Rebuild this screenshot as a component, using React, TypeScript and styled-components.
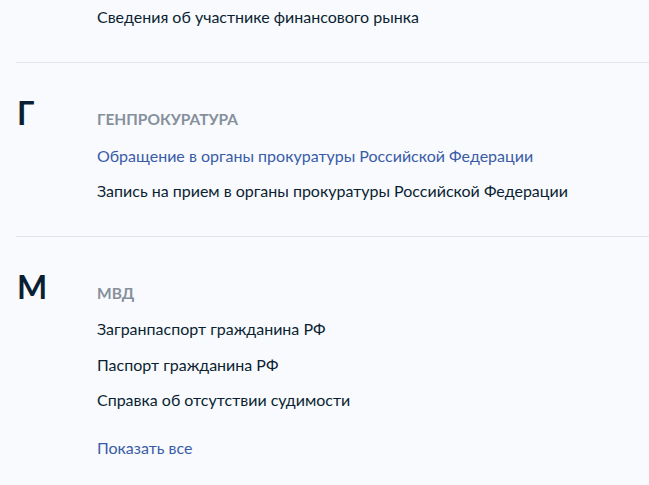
import styled, { createGlobalStyle } from "styled-components";

const GlobalStyle = createGlobalStyle`
  html, body {
    margin: 0;
    padding: 0;
    background: #f8fafd;
  }
  body {
    font-family: Lato, "Noto Sans", sans-serif;
    color: #0b1f33;
  }
`;

type Service = { title: string; link?: boolean };

type Group = {
  letter: string;
  agency: string;
  services: Service[];
  more?: boolean;
};

const groups: Group[] = [
  {
    letter: "Г",
    agency: "Генпрокуратура",
    services: [
      { title: "Обращение в органы прокуратуры Российской Федерации", link: true },
      { title: "Запись на прием в органы прокуратуры Российской Федерации" },
    ],
  },
  {
    letter: "М",
    agency: "МВД",
    services: [
      { title: "Загранпаспорт гражданина РФ" },
      { title: "Паспорт гражданина РФ" },
      { title: "Справка об отсутствии судимости" },
    ],
    more: true,
  },
];

const App = () => {
  return (
    <Page>
      <GlobalStyle />
      <Tail>
        <span />
        <List>
          <Item>Сведения об участнике финансового рынка</Item>
        </List>
      </Tail>
      {groups.map((group) => (
        <Section key={group.letter}>
          <Letter>{group.letter}</Letter>
          <Agency>{group.agency}</Agency>
          <span />
          <List>
            {group.services.map((service) => (
              <Item key={service.title} link={service.link}>
                {service.title}
              </Item>
            ))}
            {group.more && <More>Показать все</More>}
          </List>
        </Section>
      ))}
    </Page>
  );
};

const Page = styled.div`
  padding-left: 16px;
`;

const Row = styled.div`
  display: grid;
  grid-template-columns: 81px 1fr;
`;

const Tail = styled(Row)`
  padding: 7px 0 35px;
`;

const Section = styled(Row)`
  border-top: 1px solid #e1e5eb;
  padding: 30px 0 34.5px;
  align-items: baseline;
`;

const Letter = styled.div`
  font-size: 32px;
  font-weight: 700;
  line-height: 40px;
  padding-left: 1px;
  color: #0b1f33;
`;

const Agency = styled.h3`
  margin: 0;
  font-size: 15.5px;
  line-height: 20px;
  font-weight: 700;
  text-transform: uppercase;
  color: #86909c;
`;

const List = styled.div`
  display: flex;
  flex-direction: column;
  gap: 15.5px;
  padding-top: 12.5px;

  ${Tail} & {
    padding-top: 0;
  }
`;

const Item = styled.a<{ link?: boolean }>`
  font-size: 16px;
  line-height: 20px;
  color: ${({ link }) => (link ? "#3a5ca8" : "#0b1f33")};
  text-decoration: none;
  cursor: pointer;
`;

const More = styled.a`
  margin-top: 12px;
  font-size: 16px;
  line-height: 20px;
  color: #3a5ca8;
  cursor: pointer;
`;

export default App;
